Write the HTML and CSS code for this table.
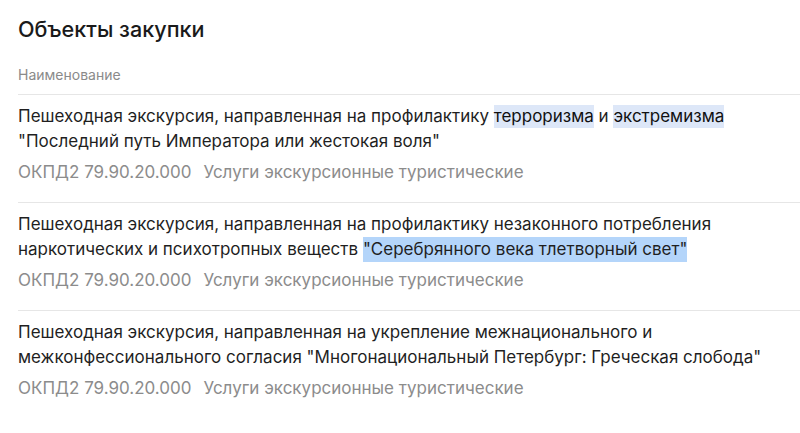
FILE: index.html
```html
<!DOCTYPE html>
<html lang="ru">
<head>
    <meta charset="UTF-8">
    <title>Объекты закупки</title>
    <link rel="stylesheet" href="styles.css">
</head>
<body>
    <div class="section">
        <h2 class="title">Объекты закупки</h2>
        <div class="col-head">Наименование</div>

        <div class="item">
            <div class="name">Пешеходная экскурсия, направленная на профилактику <span class="mark">терроризма</span> и <span class="mark">экстремизма</span><br>"Последний путь Императора или жестокая воля"</div>
            <div class="meta"><span class="code">ОКПД2 79.90.20.000</span><span>Услуги экскурсионные туристические</span></div>
        </div>

        <div class="item">
            <div class="name">Пешеходная экскурсия, направленная на профилактику незаконного потребления<br>наркотических и психотропных веществ <span class="select">"Серебрянного века тлетворный свет"</span></div>
            <div class="meta"><span class="code">ОКПД2 79.90.20.000</span><span>Услуги экскурсионные туристические</span></div>
        </div>

        <div class="item last">
            <div class="name">Пешеходная экскурсия, направленная на укрепление межнационального и<br>межконфессионального согласия "Многонациональный Петербург: Греческая слобода"</div>
            <div class="meta"><span class="code">ОКПД2 79.90.20.000</span><span>Услуги экскурсионные туристические</span></div>
        </div>
    </div>
</body>
</html>
```

FILE: styles.css
```css
body {
    margin: 0;
    background: #fff;
    font-family: Inter, "Noto Sans", sans-serif;
    color: #1f1f1f;
}

.section {
    padding: 14px 0 0 18px;
}

.title {
    margin: 0;
    font-size: 21.6px;
    font-weight: 500;
    line-height: 30px;
    color: #1a1a1a;
}

.col-head {
    margin-top: 21px;
    padding-bottom: 9px;
    font-size: 14px;
    line-height: 20px;
    color: #8a8a8a;
    border-bottom: 1px solid #e6e6e6;
}

.item {
    padding: 9px 0 17px;
    border-bottom: 1px solid #e6e6e6;
}

.item.last {
    border-bottom: none;
}

.name {
    font-size: 17px;
    line-height: 25px;
    color: #1f1f1f;
}

.meta {
    margin-top: 6px;
    font-size: 17px;
    line-height: 25px;
    color: #8c8c8c;
}

.code {
    margin-right: 12px;
}

.mark {
    background: #dde7f8;
    color: #111;
    padding: 1px 0 2px;
}

.select {
    background: #b4d5fa;
    padding: 2px 0 3px;
}
```
